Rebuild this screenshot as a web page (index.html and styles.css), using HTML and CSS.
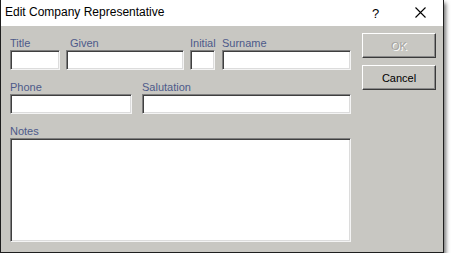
FILE: index.html
```html
<!DOCTYPE html>
<html>
<head>
<meta charset="utf-8">
<link rel="stylesheet" href="styles.css">
</head>
<body>
<div class="window">
  <div class="titlebar">
    <span class="title">Edit Company Representative</span>
    <span class="help">?</span>
    <span class="close">
      <svg width="11" height="11" viewBox="0 0 11 11"><path d="M0.5 0.5 L10.5 10.5 M10.5 0.5 L0.5 10.5" stroke="#000" stroke-width="1.1" fill="none"/></svg>
    </span>
  </div>
  <div class="body">
    <div class="form">
      <div class="row">
        <div class="field f-title"><label>Title</label><div class="input"></div></div>
        <div class="field f-given"><label>Given</label><div class="input"></div></div>
        <div class="field f-initial"><label>Initial</label><div class="input"></div></div>
        <div class="field f-surname"><label>Surname</label><div class="input"></div></div>
      </div>
      <div class="row">
        <div class="field f-phone"><label>Phone</label><div class="input"></div></div>
        <div class="field f-salutation"><label>Salutation</label><div class="input"></div></div>
      </div>
      <div class="row">
        <div class="field f-notes"><label>Notes</label><div class="input notes"></div></div>
      </div>
    </div>
    <div class="buttons">
      <div class="btn disabled">OK</div>
      <div class="btn">Cancel</div>
    </div>
  </div>
</div>
</body>
</html>
```
FILE: styles.css
```css
html, body {
  margin: 0;
  padding: 0;
  background: #ffffff;
}
.window {
  width: 442px;
  height: 252px;
  border: 1px solid #1e1e1e;
  border-top: none;
  background: #c8c7c2;
  box-shadow: 2px 3px 4px rgba(0,0,0,0.55);
  display: flex;
  flex-direction: column;
  font-family: "Liberation Sans", Arial, sans-serif;
}
.titlebar {
  height: 26px;
  background: #ffffff;
  display: flex;
  align-items: center;
  flex-shrink: 0;
}
.title {
  font-family: "Liberation Sans", Arial, sans-serif;
  font-size: 12px;
  color: #000;
  padding-left: 4px;
  flex: 1;
  position: relative;
  top: -1px;
}
.help {
  font-family: "Liberation Sans", sans-serif;
  font-size: 13px;
  width: 20px;
  margin-right: 23px;
  color: #000;
}
.close {
  display: flex;
  width: 11px;
  height: 11px;
  margin-right: 17px;
  position: relative;
  top: -1px;
}
.body {
  flex: 1;
  display: flex;
  padding: 10px 7px 0 9px;
}
.form {
  width: 341px;
  display: flex;
  flex-direction: column;
  gap: 10px;
}
.row {
  display: flex;
  gap: 6px;
}
.field {
  display: flex;
  flex-direction: column;
}
.field label {
  font-size: 11px;
  line-height: 14px;
  color: #4d5a8a;
  height: 14px;
  white-space: nowrap;
}
.input {
  box-sizing: border-box;
  height: 20px;
  background: #ffffff;
  border-top: 1px solid #7e7e7e;
  border-left: 1px solid #7e7e7e;
  border-right: 1px solid #f4f4f4;
  border-bottom: 1px solid #f4f4f4;
  box-shadow: inset 1px 1px 0 #3f3f3f, inset -1px -1px 0 #dcdcdc;
}
.notes {
  height: 104px;
}
.f-title { width: 50px; }
.f-given { width: 118px; }
.f-given label { padding-left: 4px; }
.f-initial { width: 25px; }
.f-surname { width: 129px; margin-left: 1px; }
.f-phone { width: 122px; }
.f-salutation { width: 209px; margin-left: 4px; }
.f-notes { width: 341px; }
.buttons {
  margin-left: 11px;
  margin-top: -3px;
  display: flex;
  flex-direction: column;
  gap: 7px;
}
.btn {
  box-sizing: border-box;
  width: 74px;
  height: 25px;
  display: flex;
  align-items: center;
  justify-content: center;
  font-size: 11px;
  color: #000;
  border-top: 1px solid #ffffff;
  border-left: 1px solid #ffffff;
  border-right: 1px solid #3a3a3a;
  border-bottom: 1px solid #3a3a3a;
  box-shadow: inset -1px -1px 0 #8a8a8a;
}
.btn.disabled {
  color: #a4a4a0;
  text-shadow: 1px 1px 0 #ffffff;
}
```
